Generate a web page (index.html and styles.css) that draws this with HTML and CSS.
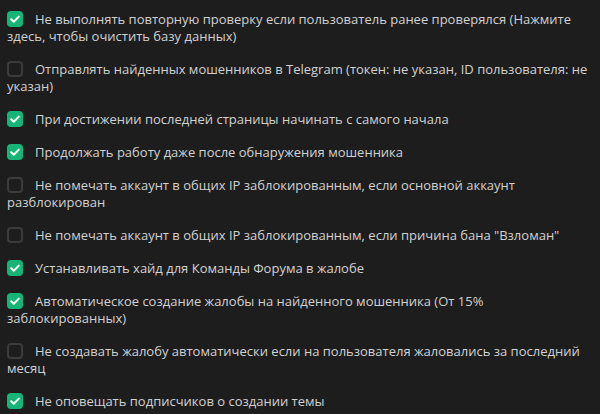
FILE: index.html
```html
<!DOCTYPE html>
<html lang="ru">
<head>
<meta charset="utf-8">
<link rel="stylesheet" href="styles.css">
</head>
<body>
<div class="list">
  <label class="opt"><span class="cb on"><svg viewBox="0 0 16 16"><path d="M4.2 8.3l2.6 2.5 5-5.2"/></svg></span>Не выполнять повторную проверку если пользователь ранее проверялся (Нажмите здесь, чтобы очистить базу данных)</label>
  <label class="opt"><span class="cb"></span>Отправлять найденных мошенников в Telegram (токен: не указан, ID пользователя: не указан)</label>
  <label class="opt"><span class="cb on"><svg viewBox="0 0 16 16"><path d="M4.2 8.3l2.6 2.5 5-5.2"/></svg></span>При достижении последней страницы начинать с самого начала</label>
  <label class="opt"><span class="cb on"><svg viewBox="0 0 16 16"><path d="M4.2 8.3l2.6 2.5 5-5.2"/></svg></span>Продолжать работу даже после обнаружения мошенника</label>
  <label class="opt"><span class="cb"></span>Не помечать аккаунт в общих IP заблокированным, если основной аккаунт разблокирован</label>
  <label class="opt"><span class="cb"></span>Не помечать аккаунт в общих IP заблокированным, если причина бана "Взломан"</label>
  <label class="opt"><span class="cb on"><svg viewBox="0 0 16 16"><path d="M4.2 8.3l2.6 2.5 5-5.2"/></svg></span>Устанавливать хайд для Команды Форума в жалобе</label>
  <label class="opt"><span class="cb on"><svg viewBox="0 0 16 16"><path d="M4.2 8.3l2.6 2.5 5-5.2"/></svg></span>Автоматическое создание жалобы на найденного мошенника (От 15% заблокированных)</label>
  <label class="opt"><span class="cb"></span>Не создавать жалобу автоматически если на пользователя жаловались за последний месяц</label>
  <label class="opt"><span class="cb on"><svg viewBox="0 0 16 16"><path d="M4.2 8.3l2.6 2.5 5-5.2"/></svg></span>Не оповещать подписчиков о создании темы</label>
</div>
</body>
</html>
```
FILE: styles.css
```css
html, body {
  margin: 0;
  padding: 0;
  background: #1d1d1d;
}
body {
  width: 600px;
  height: 414px;
  overflow: hidden;
}
.list {
  padding: 11px 4px 0 7px;
  display: flex;
  flex-direction: column;
  gap: 16px;
  font-family: "Open Sans", "Noto Sans", sans-serif;
  font-size: 13px;
  line-height: 17px;
  color: #d2d2d2;
}
.opt {
  display: block;
}
.cb {
  display: inline-block;
  box-sizing: border-box;
  width: 16px;
  height: 16px;
  border: 2px solid #3b3b3b;
  border-radius: 4px;
  vertical-align: -3px;
  margin-right: 12px;
}
.cb.on {
  background: #17b47a;
  border: none;
}
.cb svg {
  display: block;
  width: 16px;
  height: 16px;
  fill: none;
  stroke: #ffffff;
  stroke-width: 2;
  stroke-linecap: round;
  stroke-linejoin: round;
}
```
